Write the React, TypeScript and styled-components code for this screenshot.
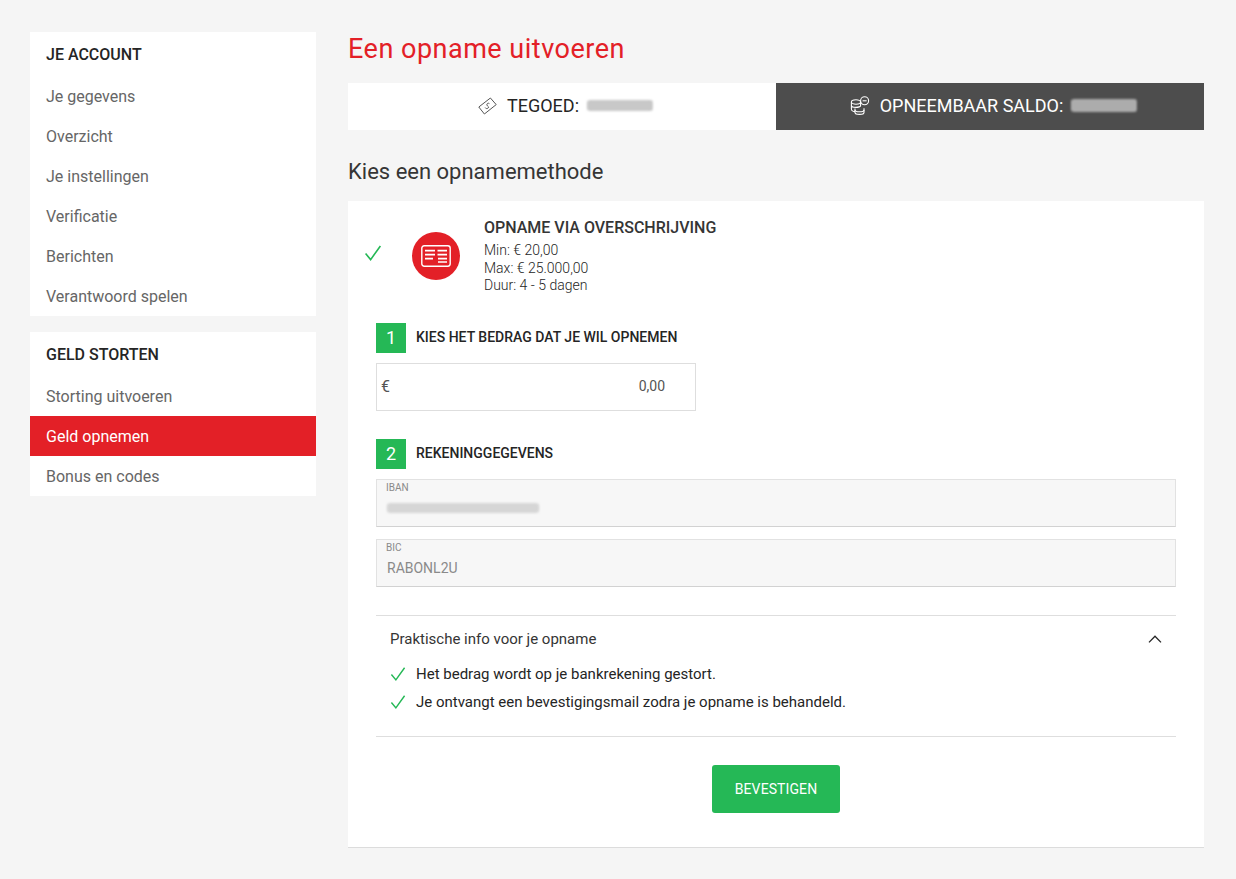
import React from "react";
import styled, { createGlobalStyle } from "styled-components";

const GlobalStyle = createGlobalStyle`
  * {
    box-sizing: border-box;
  }

  body {
    margin: 0;
    background: #f5f5f5;
    color: #252525;
    font-family: Roboto, "Liberation Sans", sans-serif;
  }
`;

const Check = ({ size = 18 }: { size?: number }) => (
  <svg width={size} height={size} viewBox="0 0 18 18" fill="none">
    <path d="M1.6 9.5 L6.6 15.6 L16.4 2" stroke="#25b856" strokeWidth="1.6" />
  </svg>
);

const TicketIcon = () => (
  <svg width="19" height="18" viewBox="0 0 19 18" fill="none" stroke="#555" strokeWidth="1">
    <path d="M0.8 10 L12.4 1 L18.2 7.6 L6.4 17 Z" />
    <path d="M11.4 6.6 C10.4 5.6 8.2 6.6 9 8.2 C9.8 9.6 11.2 9.6 10.2 11 C9.2 12 7.6 11.6 7.2 10.6" />
  </svg>
);

const CoinsIcon = () => (
  <svg width="20" height="20" viewBox="0 0 20 20" fill="none" stroke="#fff" strokeWidth="1.1">
    <ellipse cx="6" cy="6" rx="4.6" ry="2.2" />
    <path d="M1.4 6 V9.4 C1.4 12 10.6 12 10.6 9.4 V6" />
    <path d="M1.4 9.4 V13 C1.4 15 4 15.6 5 15.6" />
    <path d="M5 12.6 V16.4 C5 19 14 19 14 16.4 V12.2" />
    <path d="M5 14 C5 16.4 14 16.4 14 14" />
    <circle cx="14.6" cy="4.8" r="4" />
    <path d="M12.6 4.8 H16.6" />
  </svg>
);

const TransferIcon = () => (
  <svg width="30" height="22" viewBox="0 0 30 22" fill="none" stroke="#fff">
    <rect x="0.8" y="0.8" width="28.4" height="20.4" rx="2.4" strokeWidth="1.4" />
    <path d="M4 5.6 H14 M16.5 5.6 H26 M4 9.6 H14 M16.5 9.6 H26 M4 13.6 H12 M17 13.6 H26 M17 17 H26" strokeWidth="1.6" />
  </svg>
);

const Chevron = () => (
  <svg width="14" height="8" viewBox="0 0 14 8" fill="none">
    <path d="M1 7.4 L7 1.2 L13 7.4" stroke="#252525" strokeWidth="1.3" />
  </svg>
);

const accountLinks = ["Je gegevens", "Overzicht", "Je instellingen", "Verificatie", "Berichten", "Verantwoord spelen"];
const depositLinks = ["Storting uitvoeren", "Geld opnemen", "Bonus en codes"];

export default function App() {
  return (
    <>
      <GlobalStyle />
      <Page>
        <Sidebar>
          <MenuCard>
            <MenuTitle>JE ACCOUNT</MenuTitle>
            {accountLinks.map((link) => (
              <MenuItem key={link}>{link}</MenuItem>
            ))}
          </MenuCard>
          <MenuCard>
            <MenuTitle>GELD STORTEN</MenuTitle>
            {depositLinks.map((link) => (
              <MenuItem key={link} $active={link === "Geld opnemen"}>
                {link}
              </MenuItem>
            ))}
          </MenuCard>
        </Sidebar>

        <Main>
          <PageTitle>Een opname uitvoeren</PageTitle>
          <BalanceBar>
            <BalanceCell>
              <TicketIcon />
              <BalanceLabel>TEGOED:</BalanceLabel>
              <BlurredValue $width={66} $height={11} $tone="#c2c2c2" />
            </BalanceCell>
            <BalanceCell $dark>
              <CoinsIcon />
              <BalanceLabel>OPNEEMBAAR SALDO:</BalanceLabel>
              <BlurredValue $width={66} $height={13} $tone="#b8b8b8" />
            </BalanceCell>
          </BalanceBar>

          <SectionTitle>Kies een opnamemethode</SectionTitle>

          <MethodCard>
            <MethodHeader>
              <MethodCheck>
                <Check />
              </MethodCheck>
              <MethodBadge>
                <TransferIcon />
              </MethodBadge>
              <MethodInfo>
                <MethodName>OPNAME VIA OVERSCHRIJVING</MethodName>
                <MethodLine>Min: € 20,00</MethodLine>
                <MethodLine>Max: € 25.000,00</MethodLine>
                <MethodLine>Duur: 4 - 5 dagen</MethodLine>
              </MethodInfo>
            </MethodHeader>

            <MethodBody>
              <StepHeading>
                <StepNumber>1</StepNumber>
                <StepTitle>KIES HET BEDRAG DAT JE WIL OPNEMEN</StepTitle>
              </StepHeading>
              <AmountField>
                <AmountCurrency>€</AmountCurrency>
                <AmountValue>0,00</AmountValue>
              </AmountField>

              <StepHeading $spaced>
                <StepNumber>2</StepNumber>
                <StepTitle>REKENINGGEGEVENS</StepTitle>
              </StepHeading>
              <ReadonlyField>
                <FieldLabel>IBAN</FieldLabel>
                <BlurredValue $width={152} $height={10} $tone="#d2d2d2" />
              </ReadonlyField>
              <ReadonlyField>
                <FieldLabel>BIC</FieldLabel>
                <FieldValue>RABONL2U</FieldValue>
              </ReadonlyField>

              <InfoPanel>
                <InfoHeader>
                  <span>Praktische info voor je opname</span>
                  <Chevron />
                </InfoHeader>
                <InfoRow>
                  <Check size={16} />
                  <span>Het bedrag wordt op je bankrekening gestort.</span>
                </InfoRow>
                <InfoRow>
                  <Check size={16} />
                  <span>Je ontvangt een bevestigingsmail zodra je opname is behandeld.</span>
                </InfoRow>
              </InfoPanel>

              <ConfirmButton>BEVESTIGEN</ConfirmButton>
            </MethodBody>
          </MethodCard>
        </Main>
      </Page>
    </>
  );
}

const Page = styled.div`
  display: flex;
  gap: 32px;
  min-height: 879px;
  padding: 32px 32px 0 30px;
`;

const Sidebar = styled.nav`
  display: flex;
  flex-direction: column;
  flex: 0 0 286px;
  gap: 16px;
`;

const MenuCard = styled.div`
  background: #fff;
`;

const MenuTitle = styled.div`
  padding: 14px 16px 0;
  height: 44px;
  font-size: 16px;
  font-weight: 500;
  line-height: 18px;
  color: #252525;
`;

const MenuItem = styled.div<{ $active?: boolean }>`
  display: flex;
  align-items: center;
  height: 40px;
  padding: 0 16px;
  font-size: 16px;
  color: ${(p) => (p.$active ? "#fff" : "#666")};
  background: ${(p) => (p.$active ? "#e32027" : "transparent")};
`;

const Main = styled.main`
  flex: 1;
  min-width: 0;
`;

const PageTitle = styled.h1`
  margin: 0;
  height: 51px;
  font-size: 27px;
  font-weight: 400;
  line-height: 35px;
  letter-spacing: 0.5px;
  color: #e32027;
`;

const BalanceBar = styled.div`
  display: grid;
  grid-template-columns: 1fr 1fr;
  height: 47px;
`;

const BalanceCell = styled.div<{ $dark?: boolean }>`
  display: flex;
  align-items: center;
  justify-content: center;
  gap: 8px;
  padding: 0 0 2px 7px;
  font-size: 18px;
  color: ${(p) => (p.$dark ? "#fff" : "#252525")};
  background: ${(p) => (p.$dark ? "#4d4d4d" : "#fff")};
`;

const BalanceLabel = styled.span`
  margin-left: 2px;
`;

const BlurredValue = styled.span<{ $width: number; $height: number; $tone: string }>`
  display: block;
  width: ${(p) => p.$width}px;
  height: ${(p) => p.$height}px;
  border-radius: 3px;
  filter: blur(0.9px);
  background: repeating-linear-gradient(90deg, ${(p) => p.$tone} 0 2px, transparent 2px 3px), ${(p) => p.$tone}aa;
`;

const SectionTitle = styled.h2`
  margin: 27px 0 14px;
  height: 30px;
  font-size: 22px;
  font-weight: 400;
  line-height: 30px;
  color: #353535;
`;

const MethodCard = styled.section`
  height: 647px;
  background: #fff;
  border-bottom: 1px solid #dcdcdc;
`;

const MethodHeader = styled.div`
  display: flex;
  align-items: flex-start;
  padding: 18px 16px 0;
`;

const MethodCheck = styled.div`
  display: flex;
  margin: 25px 0 0;
  width: 48px;
`;

const MethodBadge = styled.div`
  display: flex;
  align-items: center;
  justify-content: center;
  flex: 0 0 48px;
  width: 48px;
  height: 48px;
  margin-top: 13px;
  border-radius: 50%;
  background: #e32027;
`;

const MethodInfo = styled.div`
  margin-left: 24px;
`;

const MethodName = styled.div`
  font-size: 16px;
  font-weight: 500;
  line-height: 18px;
  margin-bottom: 5px;
  color: #353535;
`;

const MethodLine = styled.div`
  font-size: 14px;
  font-weight: 300;
  line-height: 17.5px;
  color: #252525;
`;

const MethodBody = styled.div`
  display: flex;
  flex-direction: column;
  padding: 28px 28px 0;
`;

const StepHeading = styled.div<{ $spaced?: boolean }>`
  display: flex;
  align-items: center;
  gap: 10px;
  margin-top: ${(p) => (p.$spaced ? "28px" : "0")};
  margin-bottom: 10px;
`;

const StepNumber = styled.span`
  display: flex;
  align-items: center;
  justify-content: center;
  width: 30px;
  height: 30px;
  background: #25b856;
  color: #fff;
  font-size: 18px;
`;

const StepTitle = styled.span`
  position: relative;
  top: -1px;
  font-size: 14px;
  font-weight: 500;
  color: #252525;
`;

const AmountField = styled.div`
  display: flex;
  align-items: center;
  justify-content: space-between;
  width: 320px;
  height: 48px;
  padding: 0 30px 0 4px;
  border: 1px solid #dedede;
  font-size: 14px;
`;

const AmountCurrency = styled.span`
  font-size: 16px;
  color: #555;
`;

const AmountValue = styled.span`
  position: relative;
  top: -1px;
  color: #555;
`;

const ReadonlyField = styled.div`
  height: 48px;
  margin-bottom: 12px;
  padding: 2px 10px 0;
  background: #f7f7f7;
  border: 1px solid #e2e2e2;
  border-bottom-color: #d2d2d2;

  ${BlurredValue} {
    margin-top: 9px;
  }
`;

const FieldLabel = styled.div`
  margin-left: -1px;
  font-size: 10px;
  line-height: 12px;
  color: #8a8a8a;
`;

const FieldValue = styled.div`
  margin-top: 3px;
  font-size: 14px;
  line-height: 22px;
  color: #8a8a8a;
`;

const InfoPanel = styled.div`
  height: 122px;
  margin-top: 16px;
  padding: 0 14px;
  border-top: 1px solid #dedede;
  border-bottom: 1px solid #dedede;
`;

const InfoHeader = styled.div`
  display: flex;
  align-items: center;
  justify-content: space-between;
  height: 46px;
  font-size: 15px;
  color: #353535;
`;

const InfoRow = styled.div`
  display: flex;
  align-items: center;
  gap: 10px;
  height: 28px;
  margin-top: -2px;
  margin-bottom: 2px;
  font-size: 15px;
  color: #252525;
`;

const ConfirmButton = styled.button`
  align-self: center;
  width: 128px;
  height: 48px;
  margin-top: 28px;
  padding: 0;
  border: 0;
  border-radius: 3px;
  background: #25b856;
  color: #fff;
  font-family: inherit;
  font-size: 14px;
  letter-spacing: 0.1px;
`;
